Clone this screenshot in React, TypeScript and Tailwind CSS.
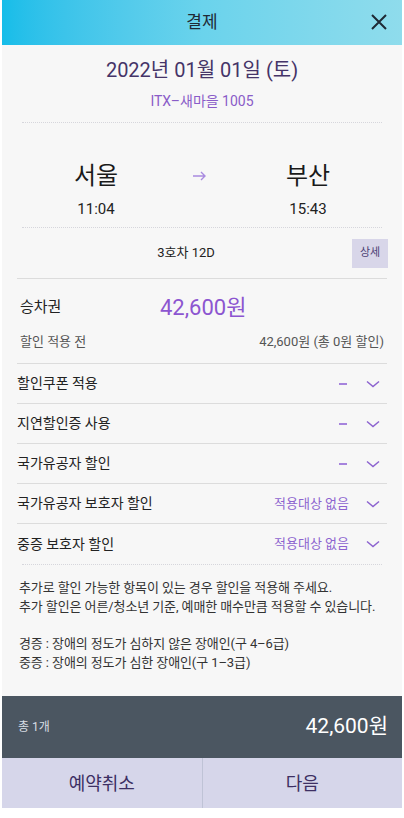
import React from 'react';

const font = { fontFamily: 'Roboto, "Noto Sans CJK KR", "Noto Sans", sans-serif' };

type Discount = { label: string; value?: string };

const discounts: Discount[] = [
  { label: '할인쿠폰 적용' },
  { label: '지연할인증 사용' },
  { label: '국가유공자 할인' },
  { label: '국가유공자 보호자 할인', value: '적용대상 없음' },
  { label: '중증 보호자 할인', value: '적용대상 없음' },
];

function Chevron() {
  return (
    <svg width="16" height="10" viewBox="0 0 16 10" fill="none">
      <path d="M2 2.5l6 5 6-5" stroke="#8c63cf" strokeWidth="1.5" />
    </svg>
  );
}

function Dotted() {
  return <div className="mx-[20px] border-t border-dotted border-[#d6d6dc]" />;
}

export default function App() {
  return (
    <div className="w-[404px] h-[818px] bg-white px-[2px]" style={font}>
      <div className="flex flex-col h-[808px] bg-[#f7f7f7]">
        {/* header */}
        <div className="relative h-[45px] shrink-0 flex items-center justify-center bg-gradient-to-r from-[#15bde9] via-[#6ad3ec] to-[#8fdcec]">
          <span className="text-[17px] text-[#1f2a35]">결제</span>
          <svg className="absolute right-[14px] top-[13px]" width="18" height="18" viewBox="0 0 18 18">
            <path d="M2 2l14 14M16 2L2 16" stroke="#1f2a35" strokeWidth="2" />
          </svg>
        </div>

        {/* train info */}
        <div className="flex flex-col items-center pt-[10px]">
          <div className="text-[20px] text-[#453468] leading-[30px]">2022년 01월 01일 (토)</div>
          <div className="text-[14px] text-[#8a5cc8] leading-[20px] mt-[6px]">ITX–새마을 1005</div>
        </div>
        <div className="mt-[11px]"><Dotted /></div>

        <div className="flex items-start justify-between px-[62px] pt-[36px]">
          <div className="flex flex-col items-center w-[64px]">
            <div className="text-[24px] text-[#1a1a1a] leading-[34px]">서울</div>
            <div className="text-[15px] text-[#222] leading-[22px] mt-[5px]">11:04</div>
          </div>
          <div className="h-[34px] flex items-center pr-[4px]">
            <svg width="14" height="10" viewBox="0 0 14 10" fill="none">
              <path d="M0 5h12M8 1l4 4-4 4" stroke="#a98ae0" strokeWidth="1.4" />
            </svg>
          </div>
          <div className="flex flex-col items-center w-[64px]">
            <div className="text-[24px] text-[#1a1a1a] leading-[34px]">부산</div>
            <div className="text-[15px] text-[#222] leading-[22px] mt-[5px]">15:43</div>
          </div>
        </div>
        <div className="mt-[7px]"><Dotted /></div>

        <div className="flex items-center h-[50px] pl-[18px] pr-[14px]">
          <span className="flex-1 text-center text-[13px] text-[#222]">3호차 12D</span>
          <span className="w-[36px] h-[29px] flex items-center justify-center bg-[#d8d6e9] text-[11px] text-[#4a3d73]">상세</span>
        </div>
        <div className="mx-[15px] border-t border-[#dcdcdc]" />

        {/* fare */}
        <div className="px-[18px]">
          <div className="flex items-center h-[50px] pt-[6px]">
            <span className="text-[15px] text-[#222] w-[140px]">승차권</span>
            <span className="text-[22px] text-[#8c55d0]">42,600원</span>
          </div>
          <div className="flex items-center justify-between h-[26px] text-[13px] text-[#555]">
            <span>할인 적용 전</span>
            <span>42,600원 (총 0원 할인)</span>
          </div>
        </div>
        <div className="mt-[8px] mx-[15px] border-t border-[#dcdcdc]" />

        {/* discounts */}
        <div className="mx-[15px]">
          {discounts.map((d, i) => (
            <div
              key={d.label}
              className={`flex items-center h-[40px] ${i < discounts.length - 1 ? 'border-b border-[#dcdcdc]' : ''}`}
            >
              <span className="flex-1 text-[14px] text-[#222]">{d.label}</span>
              {d.value ? (
                <span className="text-[13px] text-[#8c63cf]">{d.value}</span>
              ) : (
                <span className="w-[8px] h-[2px] bg-[#a684dd] mr-[2px]" />
              )}
              <span className="ml-[16px] mr-[6px] flex items-center"><Chevron /></span>
            </div>
          ))}
        </div>
        <Dotted />

        {/* notes */}
        <div className="px-[17px] pt-[13px] text-[13px] leading-[19px] text-[#333] tracking-[-0.1px]">
          <p>추가로 할인 가능한 항목이 있는 경우 할인을 적용해 주세요.</p>
          <p>추가 할인은 어른/청소년 기준, 예매한 매수만큼 적용할 수 있습니다.</p>
          <p className="mt-[18px]">경증 : 장애의 정도가 심하지 않은 장애인(구 4–6급)</p>
          <p>중증 : 장애의 정도가 심한 장애인(구 1–3급)</p>
        </div>

        <div className="flex-1" />

        {/* total */}
        <div className="flex items-center justify-between h-[62px] pl-[16px] pr-[14px] bg-[#4b5661]">
          <span className="text-[12px] text-[#d8dde3]">총 1개</span>
          <span className="text-[21px] text-white">42,600원</span>
        </div>
        <div className="flex h-[50px] bg-[#d6d6ea]">
          <button className="flex-1 text-[18px] text-[#3d2f63] border-r border-[#bfc3d6]">예약취소</button>
          <button className="flex-1 text-[18px] text-[#3d2f63]">다음</button>
        </div>
      </div>
    </div>
  );
}
